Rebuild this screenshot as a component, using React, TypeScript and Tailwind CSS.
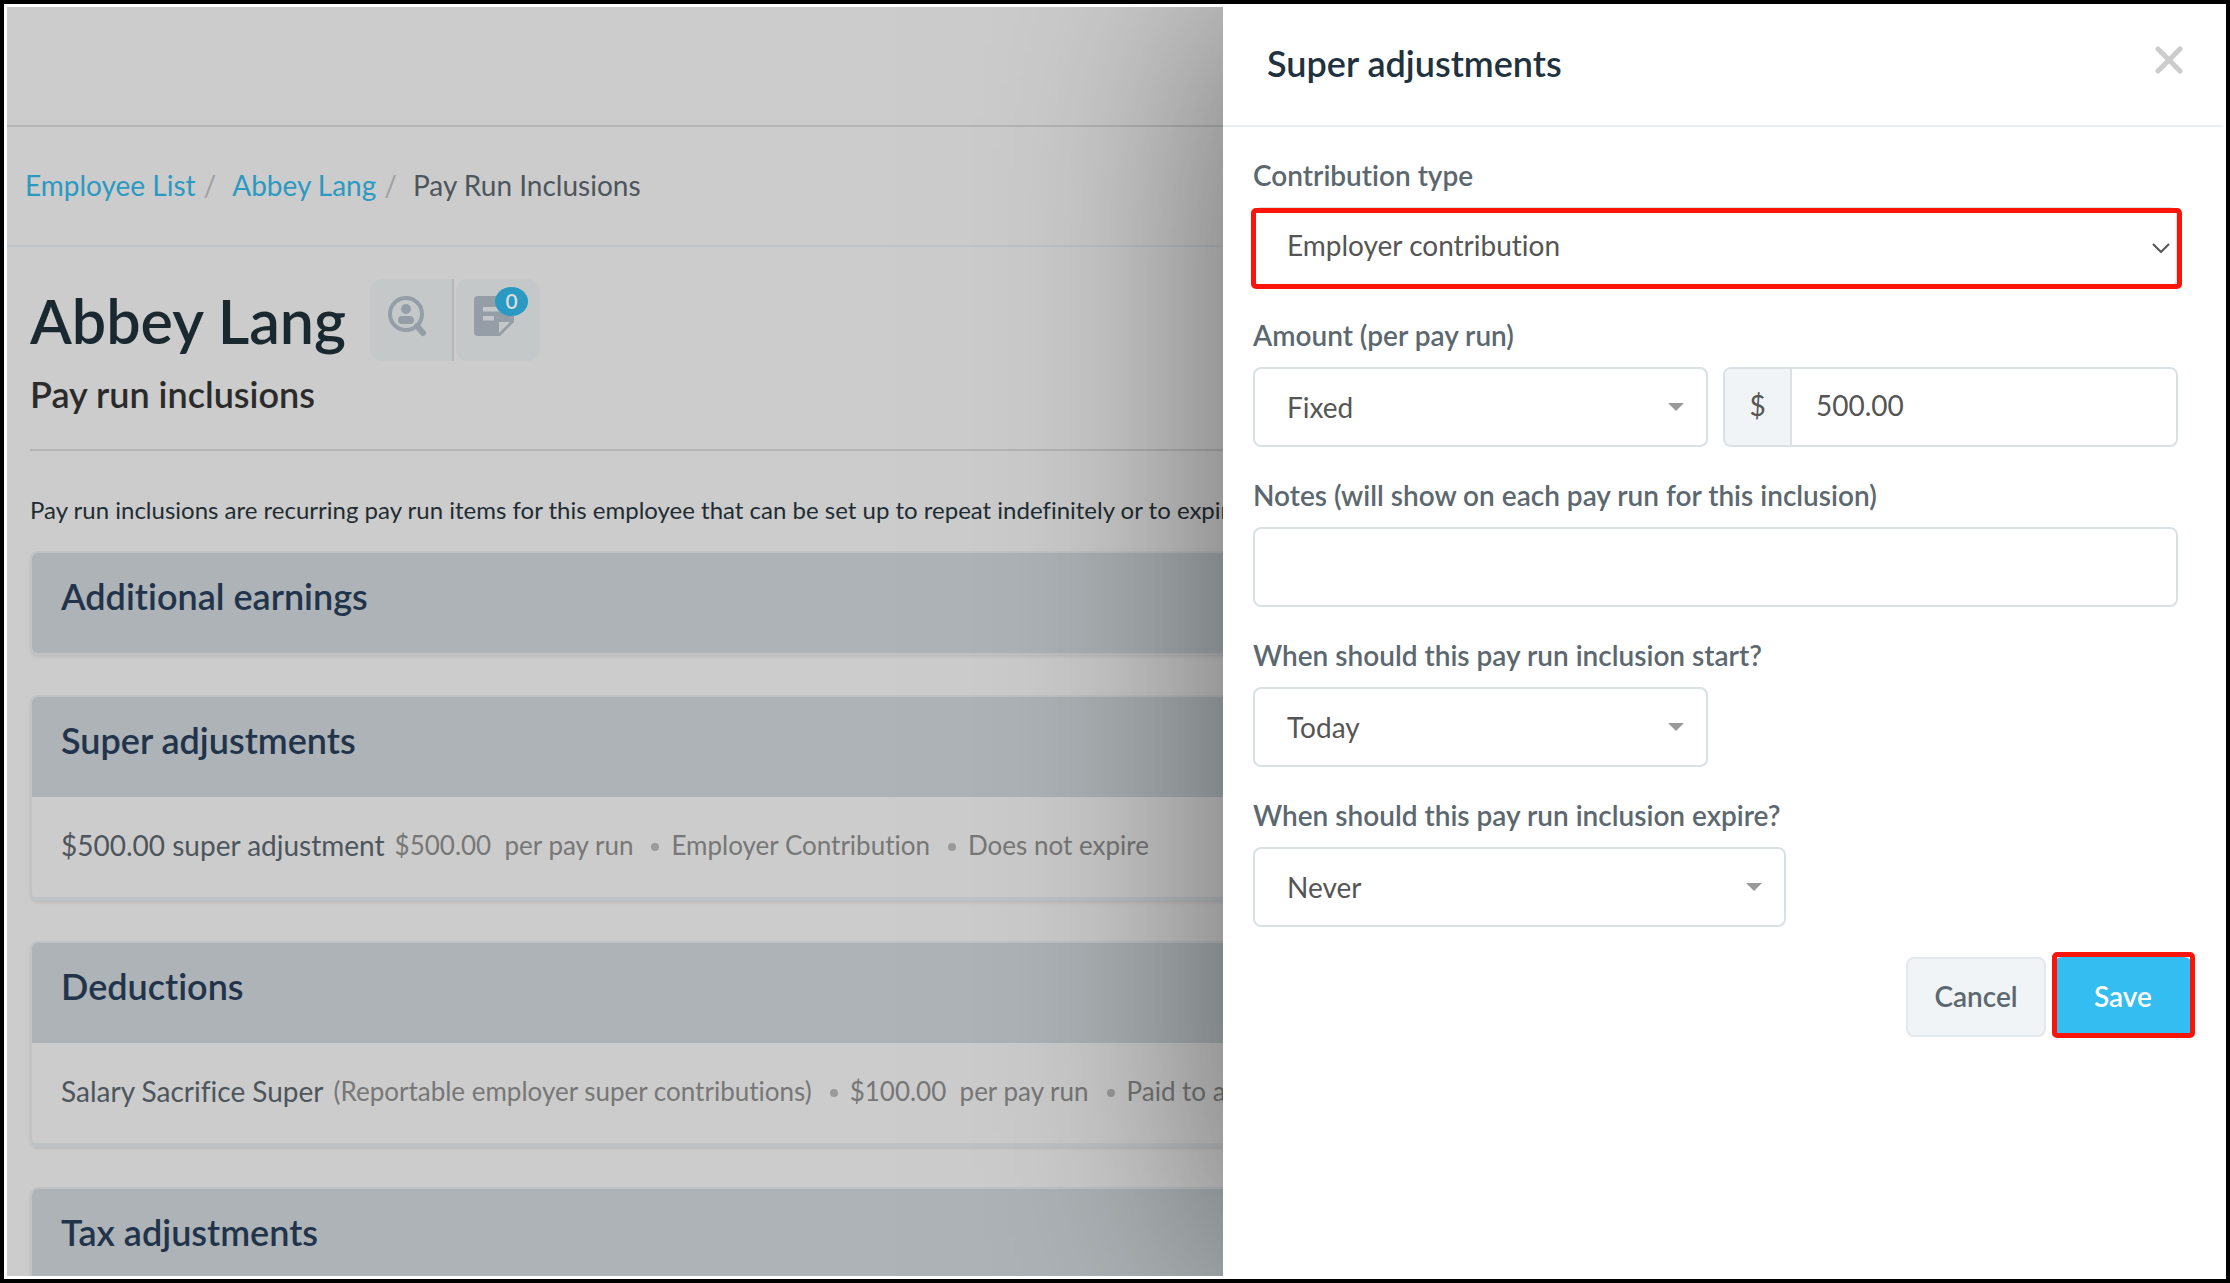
import React from "react";

type InclusionCard = {
  title: string;
  name?: string;
  details?: React.ReactNode[];
};

const cards: InclusionCard[] = [
  { title: "Additional earnings" },
  {
    title: "Super adjustments",
    name: "$500.00 super adjustment",
    details: [
      <>$500.00 &nbsp;per pay run</>,
      "Employer Contribution",
      "Does not expire",
    ],
  },
  {
    title: "Deductions",
    name: "Salary Sacrifice Super",
    details: [
      "(Reportable employer super contributions)",
      <>$100.00 &nbsp;per pay run</>,
      "Paid to a",
    ],
  },
  { title: "Tax adjustments" },
];

const labelClass =
  "mb-4 block text-[28px] leading-8 font-semibold whitespace-nowrap text-[#5c6870]";
const fieldClass =
  "block h-20 w-full appearance-none rounded-lg border-2 border-[#d9e1e5] bg-white pl-8 text-[28px] text-[#555]";

const Breadcrumb = () => (
  <nav
    aria-label="Breadcrumb"
    className="flex h-[120px] items-center border-b-2 border-[#bdc3c7] pb-0.5 pl-[18px] text-[28px] text-[#4d565c]"
  >
    <a href="#employees" className="text-[#2a9ac2]">
      Employee List
    </a>
    <span className="pr-4 pl-2 text-[#a0a0a0]">/</span>
    <a href="#abbey" className="text-[#2a9ac2]">
      Abbey Lang
    </a>
    <span className="pr-4 pl-2 text-[#a0a0a0]">/</span>
    <span>Pay Run Inclusions</span>
  </nav>
);

const ProfileIcon = () => (
  <svg width="40" height="42" viewBox="0 0 40 42" fill="none">
    <circle cx="19" cy="19" r="16" stroke="#959da7" strokeWidth="4" />
    <path d="M30 31l6 7" stroke="#959da7" strokeWidth="6" strokeLinecap="round" />
    <circle cx="19" cy="14" r="5" fill="#959da7" />
    <rect x="11" y="21" width="16" height="8" rx="4" fill="#959da7" />
  </svg>
);

const NoteIcon = () => (
  <svg width="40" height="40" viewBox="0 0 40 40">
    <path
      d="M4 0h36v26L26 40H4a4 4 0 0 1-4-4V4a4 4 0 0 1 4-4z"
      fill="#959da7"
    />
    <path d="M9 11h22v4.500H9zM9 20h11v4.500H9zM25 26h11L25 37z" fill="#c4c8c9" />
  </svg>
);

const EmployeeHeader = () => (
  <header className="border-b-2 border-[#b3b5b6] pb-[34px]">
    <div className="flex h-[82px] items-center">
      <h1 className="pt-0.5 text-[61px] leading-[72px] font-semibold text-[#1a2930]">
        Abbey Lang
      </h1>
      <div className="ml-6 flex gap-[2px]">
        <button
          type="button"
          aria-label="View profile"
          className="flex h-[82px] w-[84px] justify-center rounded-l-xl border-r-2 border-[#b4b8bb] bg-[#c4c8c9] pt-4 pr-2"
        >
          <ProfileIcon />
        </button>
        <button
          type="button"
          aria-label="Notes"
          className="relative flex h-[82px] w-[84px] justify-center rounded-xl bg-[#c4c8c9] pt-[17px] pr-2"
        >
          <NoteIcon />
          <span className="absolute top-2 right-3 flex h-[29px] w-[33px] items-center justify-center rounded-[50%] bg-[#2a9ac2] pb-0.5 text-[21px] font-semibold text-[#ddd]">
            0
          </span>
        </button>
      </div>
    </div>
    <h2 className="mt-3 text-[36px] leading-[42px] font-semibold text-[#2b2b2b]">
      Pay run inclusions
    </h2>
  </header>
);

const Card = ({ title, name, details }: InclusionCard) => (
  <section className="overflow-hidden rounded-lg border-2 border-[#bfc3c5] shadow-[0_2px_3px_rgba(0,0,0,0.08)]">
    <h3 className="h-[100px] bg-[#adb3b6] pt-[22px] pl-[29px] text-[36px] leading-[42px] font-semibold text-[#22344b]">
      {title}
    </h3>
    {name && (
      <div className="flex h-[102px] items-center border-b-2 border-[#bfc3c5] pb-1 pl-[29px] text-[26px] leading-8 text-[#777]">
        <span className="mr-2.5 text-[28px] text-[#4d565c]">{name}</span>
        {details?.map((detail, i) => (
          <React.Fragment key={i}>
            {i > 0 && (
              <span className="mt-1 mr-3 ml-[18px] size-2 shrink-0 rounded-full bg-[#9b9b9b]" />
            )}
            <span>{detail}</span>
          </React.Fragment>
        ))}
      </div>
    )}
  </section>
);

const SelectField = ({
  id,
  label,
  value,
}: {
  id: string;
  label?: string;
  value: string;
}) => (
  <div>
    {label && (
      <label htmlFor={id} className={labelClass}>
        {label}
      </label>
    )}
    <div className="relative">
      <select id={id} className={fieldClass}>
        <option>{value}</option>
      </select>
      <svg
        className="pointer-events-none absolute top-9 right-6"
        width="16"
        height="8"
        viewBox="0 0 16 8"
      >
        <path d="M0 0h16L8 8z" fill="#999" />
      </svg>
    </div>
  </div>
);

const AdjustmentsDrawer = () => (
  <aside
    role="dialog"
    aria-labelledby="drawer-title"
    className="relative z-10 w-[1000px] shrink-0 bg-white shadow-[0_0_220px_rgba(0,0,0,0.5)]"
  >
    <div className="flex h-[120px] justify-between border-b-2 border-[#e9eef1] pt-[35px] pr-10 pl-11">
      <h2
        id="drawer-title"
        className="text-[36px] leading-[42px] font-semibold text-[#1f323f]"
      >
        Super adjustments
      </h2>
      <button type="button" aria-label="Close" className="h-9">
        <svg width="28" height="28" viewBox="0 0 28 28">
          <path
            d="M3 3l22 22M25 3L3 25"
            stroke="#ccc"
            strokeWidth="5"
            strokeLinecap="round"
          />
        </svg>
      </button>
    </div>

    <form className="pt-8 pl-[30px]">
      <div className="flex flex-col gap-8 pr-[45px]">
        <div>
          <label htmlFor="type" className={labelClass}>
            Contribution type
          </label>
          <div className="relative">
            <select id="type" className={fieldClass + " pb-1"}>
              <option>Employer contribution</option>
            </select>
            <svg
              className="pointer-events-none absolute top-9 right-2"
              width="18"
              height="10"
              viewBox="0 0 18 10"
              fill="none"
            >
              <path d="M1 1l8 8 8-8" stroke="#555" strokeWidth="2" />
            </svg>
            <span className="pointer-events-none absolute top-px -right-1 -bottom-0.5 -left-0.5 rounded-[5px] border-[5px] border-[#fb1407]" />
          </div>
        </div>

        <div>
          <label htmlFor="amount-type" className={labelClass}>
            Amount (per pay run)
          </label>
          <div className="grid grid-cols-2 gap-[15px]">
            <SelectField id="amount-type" value="Fixed" />
            <div className="flex h-20 overflow-hidden rounded-lg border-2 border-[#d9e1e5] text-[28px] text-[#555]">
              <span className="flex w-[67px] items-center justify-center border-r-2 border-[#d9e1e5] bg-[#f0f4f7] pb-1">
                $
              </span>
              <input
                aria-label="Amount"
                className="min-w-0 flex-1 pb-1 pl-6"
                defaultValue="500.00"
              />
            </div>
          </div>
        </div>

        <div>
          <label htmlFor="notes" className={labelClass}>
            Notes (will show on each pay run for this inclusion)
          </label>
          <input id="notes" className={fieldClass} />
        </div>

        <div className="w-[455px]">
          <SelectField
            id="start"
            label="When should this pay run inclusion start?"
            value="Today"
          />
        </div>

        <div className="w-[533px]">
          <SelectField
            id="expire"
            label="When should this pay run inclusion expire?"
            value="Never"
          />
        </div>
      </div>

      <div className="mt-[30px] flex justify-end gap-2 pr-[31px] text-[28px] font-semibold">
        <button
          type="button"
          className="h-20 w-[140px] rounded-lg border-2 border-[#e3e8ec] bg-[#f0f4f7] pb-0.5 text-[#5c6870]"
        >
          Cancel
        </button>
        <div className="relative">
          <button
            type="submit"
            className="block h-20 w-[138px] rounded-lg bg-[#34bdf0] pb-0.5 text-white"
          >
            Save
          </button>
          <span className="pointer-events-none absolute -top-[5px] -right-[3px] -bottom-px -left-0.5 rounded-[5px] border-[5px] border-[#fb1407]" />
        </div>
      </div>
    </form>
  </aside>
);

const App = () => {
  return (
    <div className="h-screen border-4 border-black bg-white p-[3px] font-[Lato,sans-serif] [font-variant-ligatures:none]">
      <div className="flex h-full overflow-hidden">
        <main className="min-w-0 flex-1 overflow-hidden bg-[#ccc] whitespace-nowrap">
          <div className="h-[120px] border-b-2 border-[#b3b5b6]" />
          <Breadcrumb />
          <div className="pt-8 pl-[23px]">
            <EmployeeHeader />
            <p className="mt-[45px] mb-[27px] text-[24px] leading-7 text-[#1f2c33]">
              Pay run inclusions are recurring pay run items for this employee
              that can be set up to repeat indefinitely or to expire
            </p>
            <div className="-mr-2 flex flex-col gap-10">
              {cards.map((card) => (
                <Card key={card.title} {...card} />
              ))}
            </div>
          </div>
        </main>
        <AdjustmentsDrawer />
      </div>
    </div>
  );
};

export default App;
